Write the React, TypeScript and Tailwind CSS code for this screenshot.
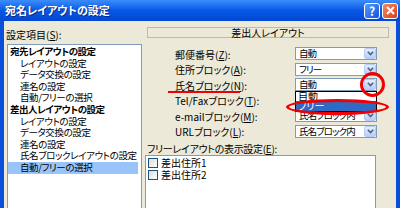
import type { ReactNode } from 'react';

const FONT = "font-['Noto_Sans_CJK_JP','Noto_Sans',sans-serif] [font-feature-settings:'palt']";

function Key({ children }: { children: ReactNode }) {
  return <span className="underline underline-offset-1">{children}</span>;
}

function Chevron() {
  return (
    <svg width="7" height="5" viewBox="0 0 7 5">
      <path d="M0.8 0.8 L3.5 3.6 L6.2 0.8" fill="none" stroke="#4D6185" strokeWidth="1.6" />
    </svg>
  );
}

function Combo({ value }: { value: string }) {
  return (
    <div className="flex h-[13px] w-[82px] items-center border border-[#7F9DB9] bg-white">
      <span className="flex-1 whitespace-nowrap pl-[3px] text-[9.5px] leading-[11px] tracking-[-0.9px] text-black">
        {value}
      </span>
      <div className="flex h-[11px] w-[12px] shrink-0 items-center justify-center rounded-[2px] border border-[#B6C9F4] bg-gradient-to-b from-[#E6EEFD] to-[#B8CEF8]">
        <Chevron />
      </div>
    </div>
  );
}

const listItems: { text: string; top?: boolean; selected?: boolean }[] = [
  { text: '宛先レイアウトの設定', top: true },
  { text: 'レイアウトの設定' },
  { text: 'データ交換の設定' },
  { text: '連名の設定' },
  { text: '自動/フリーの選択' },
  { text: '差出人レイアウトの設定', top: true },
  { text: 'レイアウトの設定' },
  { text: 'データ交換の設定' },
  { text: '連名の設定' },
  { text: '氏名ブロックレイアウトの設定' },
  { text: '自動/フリーの選択', selected: true },
];

const rows: { label: ReactNode; value: string }[] = [
  { label: <>郵便番号(<Key>Z</Key>):</>, value: '自動' },
  { label: <>住所ブロック(<Key>A</Key>):</>, value: 'フリー' },
  { label: <>氏名ブロック(<Key>N</Key>):</>, value: '自動' },
  { label: <>Tel/Faxブロック(<Key>T</Key>):</>, value: '氏名ブロック内' },
  { label: <>e-mailブロック(<Key>M</Key>):</>, value: '氏名ブロック内' },
  { label: <>URLブロック(<Key>L</Key>):</>, value: '氏名ブロック内' },
];

function TitleBar() {
  return (
    <div className="flex h-[21px] shrink-0 items-center bg-gradient-to-b from-[#3C8DFA] via-[#0757E6] to-[#0348D2] pl-[5px] pr-[2px]">
      <span className="flex-1 text-[11px] font-bold leading-none text-white [text-shadow:1px_1px_0_#0A2A8A]">
        宛名レイアウトの設定
      </span>
      <div className="flex gap-[2px]">
        <div className="flex h-[16px] w-[16px] items-center justify-center rounded-[3px] border border-white bg-gradient-to-br from-[#5B9BFF] to-[#1451D8] text-[12px] font-bold leading-none text-white">
          ?
        </div>
        <div className="flex h-[16px] w-[16px] items-center justify-center rounded-[3px] border border-white bg-gradient-to-br from-[#F08A63] to-[#D4401A]">
          <svg width="9" height="9" viewBox="0 0 9 9">
            <path d="M1 1 L8 8 M8 1 L1 8" stroke="white" strokeWidth="2" />
          </svg>
        </div>
      </div>
    </div>
  );
}

export default function App() {
  return (
    <div className={`relative flex h-[208px] w-[400px] flex-col overflow-hidden bg-[#0A4FDC] ${FONT}`}>
      <TitleBar />
      <div className="mx-[4px] flex flex-1 bg-[#ECE9D8] text-black">
        {/* left: tree list */}
        <div className="flex w-[138px] flex-col">
          <div className="mt-[8px] h-[12px] pl-[2px] text-[10px] leading-[12px]">
            設定項目(<Key>S</Key>):
          </div>
          <div className="ml-[3px] mt-[3px] flex-1 overflow-hidden border border-[#7F9DB9] bg-white pt-[1px]">
            {listItems.map((item, i) => (
              <div
                key={i}
                className={`mr-[3px] flex h-[11.6px] items-center whitespace-nowrap text-[9.5px] leading-none ${
                  item.top ? 'pl-[2px] font-bold tracking-[-0.5px]' : 'pl-[12px] tracking-[-0.4px]'
                } ${item.selected ? 'bg-[#99C4FA]' : ''}`}
              >
                {item.text}
              </div>
            ))}
          </div>
        </div>

        {/* right: sender layout */}
        <div className="ml-[5px] flex w-[242px] flex-col">
          <div className="mt-[6px] flex h-[11px] items-center justify-center border border-[#BDBAAB] text-[10px] leading-none">
            差出人レイアウト
          </div>
          <div className="mt-[9px] flex flex-col gap-[2.6px]">
            {rows.map((row, i) => (
              <div key={i} className="flex h-[13px] items-center">
                <div className="w-[148px] whitespace-nowrap pl-[28px] pt-[2px] text-[10px] leading-none">
                  {row.label}
                </div>
                <Combo value={row.value} />
              </div>
            ))}
          </div>
          <div className="mt-[5px] h-[12px] whitespace-nowrap text-[10px] leading-[12px] tracking-[-0.3px]">
            フリーレイアウトの表示設定(<Key>E</Key>):
          </div>
          <div className="-ml-[2px] h-[60px] w-[231px] border border-[#7F9DB9] bg-white pl-[2px] pt-[1px]">
            {['差出住所1', '差出住所2'].map((t) => (
              <div key={t} className="flex h-[12px] items-center gap-[3px] text-[10px] leading-none">
                <span className="h-[10px] w-[10px] border border-[#1C5180] bg-gradient-to-br from-[#DCDCD7] to-white" />
                {t}
              </div>
            ))}
          </div>
        </div>
      </div>

      {/* open dropdown of 氏名ブロック */}
      <div className="absolute left-[295px] top-[91px] w-[82px] border border-black bg-white text-[10px] leading-none">
        <div className="flex h-[9px] items-end overflow-hidden pl-[2px]">自動</div>
        <div className="flex h-[10px] items-center bg-[#316AC5] pl-[2px] text-white">フリー</div>
      </div>

      {/* red annotations */}
      <div className="absolute left-[168px] top-[91px] h-[2px] w-[72px] bg-[#F00000]" />
      <div className="absolute left-[360px] top-[72px] h-[25px] w-[25px] rounded-full border-[3px] border-[#F00000]" />
      <div className="absolute left-[286px] top-[99px] h-[16px] w-[103px] rounded-[50%] border-[3px] border-[#F00000]" />
    </div>
  );
}
